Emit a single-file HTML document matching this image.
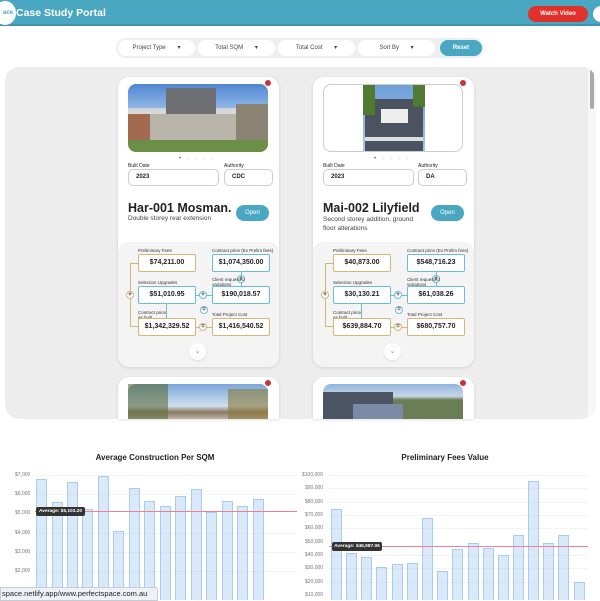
<!DOCTYPE html>
<html><head><meta charset="utf-8"><style>
*{margin:0;padding:0;box-sizing:border-box}
body{width:600px;height:600px;overflow:hidden;background:#fff;font-family:"Liberation Sans",sans-serif;position:relative;color:#222}
.a{position:absolute}
.hdr{left:0;top:0;width:600px;height:26px;background:#4aa7c2;border-bottom:2px solid #3d94ad}
.pill{position:absolute;top:40px;height:16px;background:#fff;border-radius:8px;font-size:6px;color:#444;line-height:16px;text-align:center}
.card{position:absolute;width:161px;background:#fff;border-radius:11px;box-shadow:0 1px 3px rgba(0,0,0,.12);overflow:hidden}
.lbl{position:absolute;font-size:5px;color:#222}
.inp{position:absolute;height:17px;border:1px solid #ccc;border-radius:5px;font-size:6px;font-weight:bold;line-height:15px;padding-left:7px}
.box{position:absolute;width:58px;height:18px;background:#fff;border:1.2px solid;border-radius:2px;font-size:7px;font-weight:bold;text-align:center;line-height:16px}
.g{border-color:#d4b57a}.b{border-color:#6bbcd6}
.c{position:absolute;width:8px;height:8px;border-radius:50%;background:#fff;border:1px solid;font-size:6px;line-height:6px;text-align:center;font-weight:bold}
.fl{position:absolute;font-size:4.5px;color:#333;line-height:5px}
.ax{position:absolute;font-size:5px;color:#777}
.bar{position:absolute;background:rgba(160,200,240,.4);border:1px solid #a8ccf0;border-bottom:none}
.red{position:absolute;width:8px;height:8px;border-radius:50%;background:#c8343c;border:1px solid #fff}
</style></head><body>
<div class="a hdr"></div>
<div class="a" style="left:-6px;top:1px;width:22px;height:24px;border-radius:50%;background:#fff;font-size:6px;color:#4aa7c2;font-weight:bold;line-height:24px;text-align:right;padding-right:3px">ace</div>
<div class="a" style="left:16px;top:7px;font-size:10.5px;font-weight:bold;color:#fff">Case Study Portal</div>
<div class="a" style="left:528px;top:6px;width:60px;height:16px;border-radius:8px;background:#e0312a;color:#fff;font-size:6px;font-weight:bold;text-align:center;line-height:16px">Watch Video</div>
<div class="a" style="left:593px;top:6px;width:16px;height:16px;border-radius:50%;background:#fff"></div>

<div class="a" style="left:116px;top:38px;width:368px;height:20px;background:#eee;border-radius:10px"></div>
<div class="pill" style="left:118px;width:77px">Project Type &nbsp; &nbsp; &nbsp; ▾</div>
<div class="pill" style="left:198px;width:77px">Total SQM &nbsp; &nbsp; &nbsp; ▾</div>
<div class="pill" style="left:278px;width:77px">Total Cost &nbsp; &nbsp; &nbsp; ▾</div>
<div class="pill" style="left:358px;width:77px">Sort By &nbsp; &nbsp; &nbsp; ▾</div>
<div class="pill" style="left:440px;width:42px;background:#4aa7c2;color:#fff;font-weight:bold">Reset</div>

<div class="a" style="left:5px;top:67px;width:591px;height:352px;background:#ededed;border-radius:14px;overflow:hidden">
 <div class="a" style="left:583px;top:0;width:8px;height:352px;background:#f7f7f7"></div>
 <div class="a" style="left:585px;top:2px;width:4px;height:40px;background:#aaa;border-radius:2px"></div>
</div>

<!-- card 1 -->
<div class="card" style="left:118px;top:77px;height:290px">
 <div class="a" style="left:10px;top:7px;width:140px;height:68px;border-radius:8px;overflow:hidden;background:linear-gradient(#4f86d2 0%,#8fb6e6 35%,#d8d8d8 36%)">
  <div class="a" style="left:38px;top:4px;width:50px;height:44px;background:#6c6e72"></div>
  <div class="a" style="left:20px;top:30px;width:90px;height:26px;background:#b9b4aa"></div>
  <div class="a" style="left:0;top:30px;width:22px;height:26px;background:#a26a4e"></div>
  <div class="a" style="left:108px;top:20px;width:32px;height:36px;background:#8b8475"></div>
  <div class="a" style="left:0;top:56px;width:140px;height:12px;background:#6c8f47"></div>
 </div>
 <div class="red" style="left:146px;top:2px"></div>
 <div class="a" style="left:61px;top:79px;font-size:6px;color:#666;letter-spacing:6px">•····</div>
 <div class="lbl" style="left:10px;top:86px">Built Date</div><div class="lbl" style="left:106px;top:86px">Authority</div>
 <div class="inp" style="left:10px;top:92px;width:91px">2023</div>
 <div class="inp" style="left:106px;top:92px;width:49px">CDC</div>
 <div class="a" style="left:10px;top:124px;font-size:12.5px;font-weight:bold">Har-001 Mosman.</div>
 <div class="a" style="left:10px;top:138px;font-size:6.5px;color:#444">Double storey rear extension</div>
 <div class="a" style="left:118px;top:128px;width:33px;height:16px;border-radius:8px;background:#4aa7c2;color:#fff;font-size:6px;text-align:center;line-height:16px">Open</div>
 <div class="a" style="left:0;top:165px;width:161px;height:125px;background:#f4f4f4;border-radius:10px">
  <div class="a" style="left:12px;top:21px;width:8px;height:64px;border:1.2px solid #d4b57a;border-right:none"></div>
  <div class="a" style="left:77px;top:53px;width:17px;height:1px;background:#6bbcd6"></div>
  <div class="a" style="left:77px;top:85px;width:17px;height:1px;background:#d4b57a"></div>
  <div class="a" style="left:123px;top:30px;width:1px;height:14px;background:#6bbcd6"></div>
  <div class="a" style="left:48px;top:62px;width:1px;height:14px;background:#6bbcd6"></div>
  <div class="c" style="left:8px;top:49px;border-color:#d4b57a">+</div>
  <div class="c" style="left:81px;top:49px;border-color:#6bbcd6">+</div>
  <div class="c" style="left:119px;top:33px;border-color:#6bbcd6">+</div>
  <div class="c" style="left:81px;top:81px;border-color:#d4b57a">=</div>
  <div class="c" style="left:82px;top:64px;border-color:#6bbcd6">=</div>
  <div class="fl" style="left:20px;top:6px">Preliminary Fees</div>
  <div class="fl" style="left:94px;top:6px">Contract price (Ex Prelim fees)</div>
  <div class="fl" style="left:20px;top:38px">Selection Upgrades</div>
  <div class="fl" style="left:94px;top:35px">Client requested<br>variations</div>
  <div class="fl" style="left:20px;top:68px">Contract price<br>as built</div>
  <div class="fl" style="left:94px;top:70px">Total Project Cost</div>
  <div class="box g" style="left:20px;top:12px">$74,211.00</div>
  <div class="box b" style="left:94px;top:12px">$1,074,350.00</div>
  <div class="box b" style="left:20px;top:44px">$51,010.95</div>
  <div class="box b" style="left:94px;top:44px">$190,018.57</div>
  <div class="box g" style="left:20px;top:76px">$1,342,329.52</div>
  <div class="box g" style="left:94px;top:76px">$1,416,540.52</div>
  <div class="a" style="left:71px;top:101px;width:17px;height:17px;border-radius:50%;background:#fff;color:#4aa7c2;font-size:7px;text-align:center;line-height:17px;box-shadow:0 1px 2px rgba(0,0,0,.1)">⌄</div>
 </div>
</div>

<!-- card 2 -->
<div class="card" style="left:313px;top:77px;height:290px">
 <div class="a" style="left:10px;top:7px;width:140px;height:68px;border-radius:8px;overflow:hidden;background:#fff;border:1px solid #ccc">
  <div class="a" style="left:39px;top:0;width:62px;height:68px;background:linear-gradient(#6e9fd8,#a9c8ea)"></div>
  <div class="a" style="left:41px;top:14px;width:58px;height:54px;background:#4b5260"></div>
  <div class="a" style="left:39px;top:0;width:12px;height:30px;background:#4f7a32"></div>
  <div class="a" style="left:89px;top:0;width:12px;height:22px;background:#4f7a32"></div>
  <div class="a" style="left:57px;top:24px;width:27px;height:14px;background:#eee"></div>
  <div class="a" style="left:41px;top:52px;width:58px;height:4px;background:#ddd"></div>
 </div>
 <div class="red" style="left:146px;top:2px"></div>
 <div class="a" style="left:61px;top:79px;font-size:6px;color:#666;letter-spacing:6px">•····</div>
 <div class="lbl" style="left:10px;top:86px">Built Date</div><div class="lbl" style="left:105px;top:86px">Authority</div>
 <div class="inp" style="left:10px;top:92px;width:91px">2023</div>
 <div class="inp" style="left:105px;top:92px;width:49px">DA</div>
 <div class="a" style="left:10px;top:124px;font-size:12.5px;font-weight:bold">Mai-002 Lilyfield</div>
 <div class="a" style="left:10px;top:138px;font-size:6.5px;color:#444;width:100px;line-height:9px">Second storey addition, ground floor alterations</div>
 <div class="a" style="left:118px;top:128px;width:33px;height:16px;border-radius:8px;background:#4aa7c2;color:#fff;font-size:6px;text-align:center;line-height:16px">Open</div>
 <div class="a" style="left:0;top:165px;width:161px;height:125px;background:#f4f4f4;border-radius:10px">
  <div class="a" style="left:12px;top:21px;width:8px;height:64px;border:1.2px solid #d4b57a;border-right:none"></div>
  <div class="a" style="left:77px;top:53px;width:17px;height:1px;background:#6bbcd6"></div>
  <div class="a" style="left:77px;top:85px;width:17px;height:1px;background:#d4b57a"></div>
  <div class="a" style="left:123px;top:30px;width:1px;height:14px;background:#6bbcd6"></div>
  <div class="a" style="left:48px;top:62px;width:1px;height:14px;background:#6bbcd6"></div>
  <div class="c" style="left:8px;top:49px;border-color:#d4b57a">+</div>
  <div class="c" style="left:81px;top:49px;border-color:#6bbcd6">+</div>
  <div class="c" style="left:119px;top:33px;border-color:#6bbcd6">+</div>
  <div class="c" style="left:81px;top:81px;border-color:#d4b57a">=</div>
  <div class="c" style="left:82px;top:64px;border-color:#6bbcd6">=</div>
  <div class="fl" style="left:20px;top:6px">Preliminary Fees</div>
  <div class="fl" style="left:94px;top:6px">Contract price (Ex Prelim fees)</div>
  <div class="fl" style="left:20px;top:38px">Selection Upgrades</div>
  <div class="fl" style="left:94px;top:35px">Client requested<br>variations</div>
  <div class="fl" style="left:20px;top:68px">Contract price<br>as built</div>
  <div class="fl" style="left:94px;top:70px">Total Project Cost</div>
  <div class="box g" style="left:20px;top:12px">$40,873.00</div>
  <div class="box b" style="left:94px;top:12px">$548,716.23</div>
  <div class="box b" style="left:20px;top:44px">$30,130.21</div>
  <div class="box b" style="left:94px;top:44px">$61,038.26</div>
  <div class="box g" style="left:20px;top:76px">$639,884.70</div>
  <div class="box g" style="left:94px;top:76px">$680,757.70</div>
  <div class="a" style="left:71px;top:101px;width:17px;height:17px;border-radius:50%;background:#fff;color:#4aa7c2;font-size:7px;text-align:center;line-height:17px;box-shadow:0 1px 2px rgba(0,0,0,.1)">⌄</div>
 </div>
</div>

<!-- partial cards row 2 -->
<div class="card" style="left:118px;top:377px;height:42px;border-radius:11px 11px 0 0">
 <div class="a" style="left:10px;top:7px;width:140px;height:40px;border-radius:8px 8px 0 0;background:linear-gradient(#7aa6d8,#cfe0ee 55%,#8c7a60 70%,#ddd)">
  <div class="a" style="left:0;top:0;width:40px;height:40px;background:#5d6e3c;opacity:.6"></div>
  <div class="a" style="left:100px;top:5px;width:40px;height:35px;background:#8a7a3c;opacity:.6"></div>
 </div>
 <div class="red" style="left:146px;top:2px"></div>
</div>
<div class="card" style="left:313px;top:377px;height:42px;border-radius:11px 11px 0 0">
 <div class="a" style="left:10px;top:7px;width:140px;height:40px;border-radius:8px 8px 0 0;background:linear-gradient(#8fb4dc,#c8d8e8 30%,#6a7d55 40%)">
  <div class="a" style="left:0;top:8px;width:70px;height:32px;background:#4b5563"></div>
  <div class="a" style="left:30px;top:20px;width:50px;height:20px;background:#7b8ba5"></div>
 </div>
 <div class="red" style="left:146px;top:2px"></div>
</div>

<!-- chart 1 -->
<div class="a" style="left:0;top:453px;width:310px;text-align:center;font-size:8px;font-weight:bold">Average Construction Per SQM</div>
<div class="ax" style="left:15px;top:472px">$7,000</div><div class="ax" style="left:15px;top:491px">$6,000</div><div class="ax" style="left:15px;top:510px">$5,000</div><div class="ax" style="left:15px;top:530px">$4,000</div><div class="ax" style="left:15px;top:549px">$3,000</div><div class="ax" style="left:15px;top:568px">$2,000</div>
<div class="a" style="left:35px;top:475px;width:262px;height:1px;background:#f3f3f3"></div>
<div class="a" style="left:35px;top:494px;width:262px;height:1px;background:#f3f3f3"></div>
<div class="a" style="left:35px;top:533px;width:262px;height:1px;background:#f3f3f3"></div>
<div class="a" style="left:35px;top:552px;width:262px;height:1px;background:#f3f3f3"></div>
<div class="a" style="left:35px;top:571px;width:262px;height:1px;background:#f3f3f3"></div>
<div class="bar" style="left:36px;top:479px;width:11px;height:121px"></div>
<div class="bar" style="left:52px;top:502px;width:11px;height:98px"></div>
<div class="bar" style="left:67px;top:482px;width:11px;height:118px"></div>
<div class="bar" style="left:82px;top:509px;width:11px;height:91px"></div>
<div class="bar" style="left:98px;top:476px;width:11px;height:124px"></div>
<div class="bar" style="left:113px;top:531px;width:11px;height:69px"></div>
<div class="bar" style="left:129px;top:488px;width:11px;height:112px"></div>
<div class="bar" style="left:144px;top:501px;width:11px;height:99px"></div>
<div class="bar" style="left:160px;top:506px;width:11px;height:94px"></div>
<div class="bar" style="left:175px;top:496px;width:11px;height:104px"></div>
<div class="bar" style="left:191px;top:489px;width:11px;height:111px"></div>
<div class="bar" style="left:206px;top:512px;width:11px;height:88px"></div>
<div class="bar" style="left:222px;top:501px;width:11px;height:99px"></div>
<div class="bar" style="left:237px;top:506px;width:11px;height:94px"></div>
<div class="bar" style="left:253px;top:499px;width:11px;height:101px"></div>
<div class="a" style="left:35px;top:511px;width:262px;height:1px;background:#f08090"></div>
<div class="a" style="left:36px;top:507px;width:49px;height:9px;background:#333;border-radius:2px;color:#fff;font-size:4.8px;font-weight:bold;line-height:9px;text-align:center">Average: $5,103.20</div>

<!-- chart 2 -->
<div class="a" style="left:300px;top:453px;width:290px;text-align:center;font-size:8px;font-weight:bold">Preliminary Fees Value</div>
<div class="ax" style="left:302px;top:472px">$100,000</div><div class="ax" style="left:305px;top:485px">$90,000</div><div class="ax" style="left:305px;top:499px">$80,000</div><div class="ax" style="left:305px;top:512px">$70,000</div><div class="ax" style="left:305px;top:525px">$60,000</div><div class="ax" style="left:305px;top:539px">$50,000</div><div class="ax" style="left:305px;top:552px">$40,000</div><div class="ax" style="left:305px;top:565px">$30,000</div><div class="ax" style="left:305px;top:579px">$20,000</div><div class="ax" style="left:305px;top:592px">$10,000</div>
<div class="a" style="left:329px;top:475px;width:259px;height:1px;background:#f3f3f3"></div>
<div class="a" style="left:329px;top:488px;width:259px;height:1px;background:#f3f3f3"></div>
<div class="a" style="left:329px;top:502px;width:259px;height:1px;background:#f3f3f3"></div>
<div class="a" style="left:329px;top:515px;width:259px;height:1px;background:#f3f3f3"></div>
<div class="a" style="left:329px;top:528px;width:259px;height:1px;background:#f3f3f3"></div>
<div class="a" style="left:329px;top:555px;width:259px;height:1px;background:#f3f3f3"></div>
<div class="a" style="left:329px;top:568px;width:259px;height:1px;background:#f3f3f3"></div>
<div class="a" style="left:329px;top:582px;width:259px;height:1px;background:#f3f3f3"></div>
<div class="bar" style="left:331px;top:509px;width:11px;height:91px"></div>
<div class="bar" style="left:346px;top:553px;width:11px;height:47px"></div>
<div class="bar" style="left:361px;top:557px;width:11px;height:43px"></div>
<div class="bar" style="left:376px;top:567px;width:11px;height:33px"></div>
<div class="bar" style="left:392px;top:564px;width:11px;height:36px"></div>
<div class="bar" style="left:407px;top:563px;width:11px;height:37px"></div>
<div class="bar" style="left:422px;top:518px;width:11px;height:82px"></div>
<div class="bar" style="left:437px;top:571px;width:11px;height:29px"></div>
<div class="bar" style="left:452px;top:549px;width:11px;height:51px"></div>
<div class="bar" style="left:468px;top:543px;width:11px;height:57px"></div>
<div class="bar" style="left:483px;top:548px;width:11px;height:52px"></div>
<div class="bar" style="left:498px;top:555px;width:11px;height:45px"></div>
<div class="bar" style="left:513px;top:535px;width:11px;height:65px"></div>
<div class="bar" style="left:528px;top:481px;width:11px;height:119px"></div>
<div class="bar" style="left:543px;top:543px;width:11px;height:57px"></div>
<div class="bar" style="left:558px;top:535px;width:11px;height:65px"></div>
<div class="bar" style="left:574px;top:582px;width:11px;height:18px"></div>
<div class="a" style="left:329px;top:546px;width:259px;height:1px;background:#f08090"></div>
<div class="a" style="left:332px;top:542px;width:50px;height:9px;background:#333;border-radius:2px;color:#fff;font-size:4.8px;font-weight:bold;line-height:9px;text-align:center">Average: $46,987.06</div>

<div class="a" style="left:0;top:587px;width:158px;height:14px;background:#eef1f6;border:1px solid #c8ccd4;border-radius:0 3px 0 0;font-size:7.5px;color:#222;line-height:12px;padding-left:1px;white-space:nowrap;overflow:hidden">space.netlify.app/www.perfectspace.com.au</div>
</body></html>
